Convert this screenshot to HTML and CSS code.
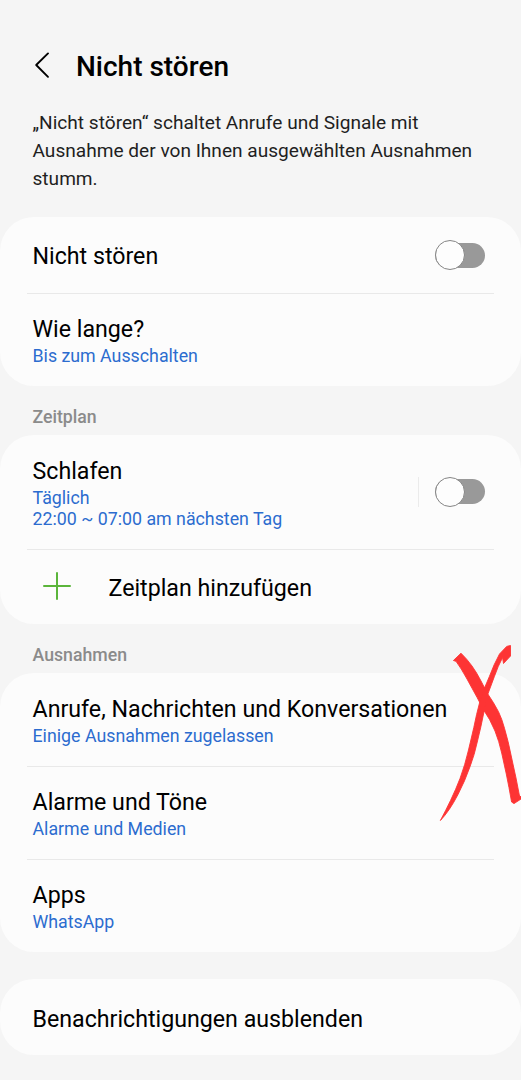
FILE: index.html
```
<!DOCTYPE html>
<html lang="de">
<head>
<meta charset="utf-8">
<title>Nicht stören</title>
<link rel="stylesheet" href="styles.css">
</head>
<body>
<main class="screen">
  <header class="header">
    <svg class="back" viewBox="0 0 16 28" width="16" height="28"><path d="M14 2.4 2.2 14 14 25.8"/></svg>
    <h1 class="heading">Nicht stören</h1>
  </header>
  <p class="intro">„Nicht stören“ schaltet Anrufe und Signale mit<br>Ausnahme der von Ihnen ausgewählten Ausnahmen<br>stumm.</p>

  <section class="card card-main">
    <div class="row row-single">
      <div class="title">Nicht stören</div>
      <div class="toggle"><span class="knob"></span></div>
    </div>
    <div class="row">
      <div class="text"><div class="title">Wie lange?</div><div class="sub">Bis zum Ausschalten</div></div>
    </div>
  </section>

  <h2 class="label">Zeitplan</h2>
  <section class="card card-plan">
    <div class="row row-tall">
      <div class="text"><div class="title">Schlafen</div><div class="sub">Täglich<br>22:00 ~ 07:00 am nächsten Tag</div></div>
      <div class="toggle-box"><div class="toggle"><span class="knob"></span></div></div>
    </div>
    <div class="row row-add">
      <svg class="plus" viewBox="0 0 28 28" width="28" height="28"><path d="M14 1v26M1 14h26"/></svg>
      <div class="title">Zeitplan hinzufügen</div>
    </div>
  </section>

  <h2 class="label">Ausnahmen</h2>
  <section class="card card-exceptions">
    <div class="row">
      <div class="text"><div class="title">Anrufe, Nachrichten und Konversationen</div><div class="sub">Einige Ausnahmen zugelassen</div></div>
    </div>
    <div class="row">
      <div class="text"><div class="title">Alarme und Töne</div><div class="sub">Alarme und Medien</div></div>
    </div>
    <div class="row">
      <div class="text"><div class="title">Apps</div><div class="sub">WhatsApp</div></div>
    </div>
  </section>

  <section class="card card-hide">
    <div class="row">
      <div class="title">Benachrichtigungen ausblenden</div>
    </div>
  </section>

  <svg class="scribble" viewBox="430 640 91 190" width="91" height="190">
    <path d="M453.4 660.5 461 653.2Q467 659 472 666Q477 673 481 681L487.5 693.5Q494 703 498.5 711.7Q502 719 504.5 728.3Q508.5 742 511 755L516 778 519.5 796 521 796.7V799L514 803.6 511.6 802Q509 787 506.3 774L501.7 753Q499 741 495 731Q490 719 483.5 709.7L477 697.3 467 679Q461 668 456 661.3Z"/>
    <path d="M440.4 820.5Q446 810 450.5 800.5Q456 789 460 778.5Q465 765 468.5 750L473.8 727.5Q476.5 714 479.5 703Q483 690 489.3 676.7Q494 664 499.5 654L506.7 646.4 510.5 645.5V656L503.5 663.5 502.6 657.5Q498 666 494.3 676.7L487.5 695Q485.5 703 484 711.7Q481 727 477.5 741Q474.5 755 470 766.7Q465 781 458 794.5Q449.500 811 440.4 820.5Z"/>
  </svg>
</main>
</body>
</html>
```

FILE: styles.css
```
* { box-sizing: border-box; }

body {
  margin: 0;
  background: #f5f5f5;
  color: #000;
  font-family: Roboto, "Liberation Sans", sans-serif;
}

.screen {
  position: relative;
  width: 521px;
  height: 1080px;
  overflow: hidden;
}

.header {
  display: flex;
  align-items: center;
  gap: 26px;
  height: 34px;
  margin: 49px 0 0 34px;
}

.back { margin-top: -2px; }

.back path {
  fill: none;
  stroke: #000;
  stroke-width: 1.9;
  stroke-linecap: round;
  stroke-linejoin: round;
}

.heading {
  margin: 0;
  padding-top: 2px;
  font-size: 28px;
  font-weight: 500;
  line-height: 34px;
}

.intro {
  height: 84px;
  margin: 25.5px 0 24.5px 32.5px;
  color: #1f1f1f;
  font-size: 19.1px;
  line-height: 28px;
  white-space: nowrap;
}

.card {
  overflow: hidden;
  padding: 0 27px;
  border-radius: 34px;
  background: #fcfcfc;
}

.card-main { height: 169px; }
.card-plan { height: 189px; }
.card-exceptions { height: 279px; }
.card-hide { height: 76px; margin-top: 27px; }

.row {
  display: flex;
  align-items: center;
  justify-content: space-between;
  height: 93px;
  padding: 0 9.5px 0 5.5px;
}

.row + .row { border-top: 1.5px solid #e9e9e9; }
.row-single, .card-hide .row { height: 76px; }
.row-tall { height: 114px; }

.row-add {
  justify-content: flex-start;
  gap: 37.5px;
  height: 75px;
  padding-left: 16px;
}

.plus { margin-top: -2px; }

.title {
  padding-top: 2px;
  font-size: 23.2px;
  line-height: 27px;
  white-space: nowrap;
}

.text .title { padding-top: 3px; }
.card-hide .title { padding-top: 4px; }

.sub {
  margin-top: 3px;
  color: #2c6ccf;
  font-size: 17.8px;
  line-height: 20.7px;
}

.label {
  height: 49px;
  margin: 0;
  padding: 21px 0 0 32.5px;
  color: #8b8b8b;
  font-size: 17.7px;
  font-weight: 500;
  line-height: 21px;
}

.toggle {
  display: flex;
  align-items: center;
  width: 50px;
  height: 25px;
  border-radius: 13px;
  background: #999;
}

.knob {
  flex: none;
  width: 30px;
  height: 30px;
  border: 1.3px solid #858585;
  border-radius: 50%;
  background: #fdfdfd;
}

.toggle-box {
  display: flex;
  align-items: center;
  height: 30px;
  margin-top: -1px;
  padding-left: 16px;
  border-left: 1px solid #ebebeb;
}

.plus path {
  fill: none;
  stroke: #5bb53b;
  stroke-width: 2;
  stroke-linecap: round;
}

.scribble {
  position: absolute;
  top: 640px;
  left: 430px;
}

.scribble path {
  fill: #fd3434;
  stroke: #fd3434;
  stroke-width: 0.9;
}
```
